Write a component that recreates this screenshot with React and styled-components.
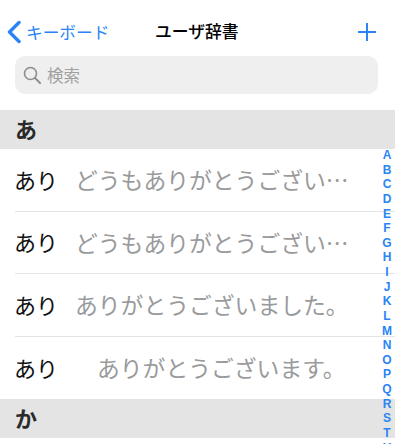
import React from "react";
import styled, { createGlobalStyle } from "styled-components";

const GlobalStyle = createGlobalStyle`
  html, body {
    margin: 0;
    padding: 0;
    background: #fff;
  }
  body {
    font-family: "Noto Sans CJK JP", "Liberation Sans", sans-serif;
  }
`;

const Page = styled.div`
  position: relative;
  width: 400px;
  height: 444px;
  overflow: hidden;
  background: #fff;
`;

const Screen = styled.div`
  width: 395px;
`;

const NavBar = styled.div`
  display: flex;
  align-items: center;
  justify-content: space-between;
  height: 56px;
  padding: 8px 18px 0 7px;
  box-sizing: border-box;
  position: relative;
`;

const BackLink = styled.div`
  display: flex;
  align-items: center;
  gap: 5px;
  color: #2a84f5;
  font-size: 16.7px;
  line-height: 20px;
`;

const Title = styled.div`
  position: absolute;
  left: 155px;
  top: 20px;
  font-size: 16.8px;
  line-height: 22px;
  font-weight: 500;
  color: #000;
`;

const SearchBar = styled.div`
  display: flex;
  align-items: center;
  gap: 6px;
  height: 38px;
  margin: 0 17px 16px 15px;
  padding-left: 8px;
  border-radius: 10px;
  background: #efefef;
  color: #a0a0a0;
  font-size: 16.5px;
  line-height: 36px;
`;

const SectionHeader = styled.div`
  display: flex;
  align-items: center;
  height: 39px;
  padding: 0 0 3px 15px;
  box-sizing: border-box;
  background: #e4e4e4;
  color: #2a2a2a;
  font-size: 22px;
  font-weight: 700;
`;

const List = styled.div`
  padding-left: 15px;
`;

const Row = styled.div`
  display: flex;
  align-items: center;
  height: 62.5px;
  box-sizing: border-box;
  border-bottom: ${(p) => (p.$last ? "none" : "1px solid #e4e4e4")};
  font-size: 22px;
`;

const Word = styled.span`
  color: #111;
  width: 61px;
  flex: none;
  margin: -2px 0 0 -1px;
`;

const Reading = styled.span`
  color: #999a9c;
  font-size: 22.8px;
  white-space: nowrap;
  margin-left: ${(p) => p.$indent || 0}px;
`;

const IndexBar = styled.div`
  position: absolute;
  top: 148px;
  left: 377px;
  width: 20px;
  display: flex;
  flex-direction: column;
  align-items: center;
  color: #2a84f5;
  font-family: "Liberation Sans", sans-serif;
  font-size: 12px;
  font-weight: 700;
  line-height: 14.62px;
`;

const rows = [
  { reading: "どうもありがとうござい…" },
  { reading: "どうもありがとうござい…" },
  { reading: "ありがとうございました。" },
  { reading: "ありがとうございます。", indent: 22, last: true },
];

const letters = "ABCDEFGHIJKLMNOPQRSTU".split("");

export default function App() {
  return (
    <Page>
      <GlobalStyle />
      <Screen>
        <NavBar>
          <BackLink>
            <svg width="14" height="24" viewBox="0 0 14 24" fill="none">
              <path
                d="M12 2.5 L2.5 12 L12 21.5"
                stroke="#2a84f5"
                strokeWidth="3.4"
                strokeLinecap="round"
                strokeLinejoin="round"
              />
            </svg>
            キーボード
          </BackLink>
          <Title>ユーザ辞書</Title>
          <svg width="20" height="20" viewBox="0 0 20 20" fill="none">
            <path d="M10 1 V19 M1 10 H19" stroke="#2a84f5" strokeWidth="2" />
          </svg>
        </NavBar>
        <SearchBar>
          <svg width="18" height="18" viewBox="0 0 18 18" fill="none">
            <circle cx="7.5" cy="7.5" r="6" stroke="#8e8e8e" strokeWidth="1.6" />
            <path d="M12 12 L17 17" stroke="#8e8e8e" strokeWidth="2" strokeLinecap="round" />
          </svg>
          検索
        </SearchBar>
        <SectionHeader>あ</SectionHeader>
        <List>
          {rows.map((r, i) => (
            <Row key={i} $last={r.last}>
              <Word>あり</Word>
              <Reading $indent={r.indent}>{r.reading}</Reading>
            </Row>
          ))}
        </List>
        <SectionHeader>か</SectionHeader>
      </Screen>
      <IndexBar>
        {letters.map((l) => (
          <span key={l}>{l}</span>
        ))}
      </IndexBar>
    </Page>
  );
}
